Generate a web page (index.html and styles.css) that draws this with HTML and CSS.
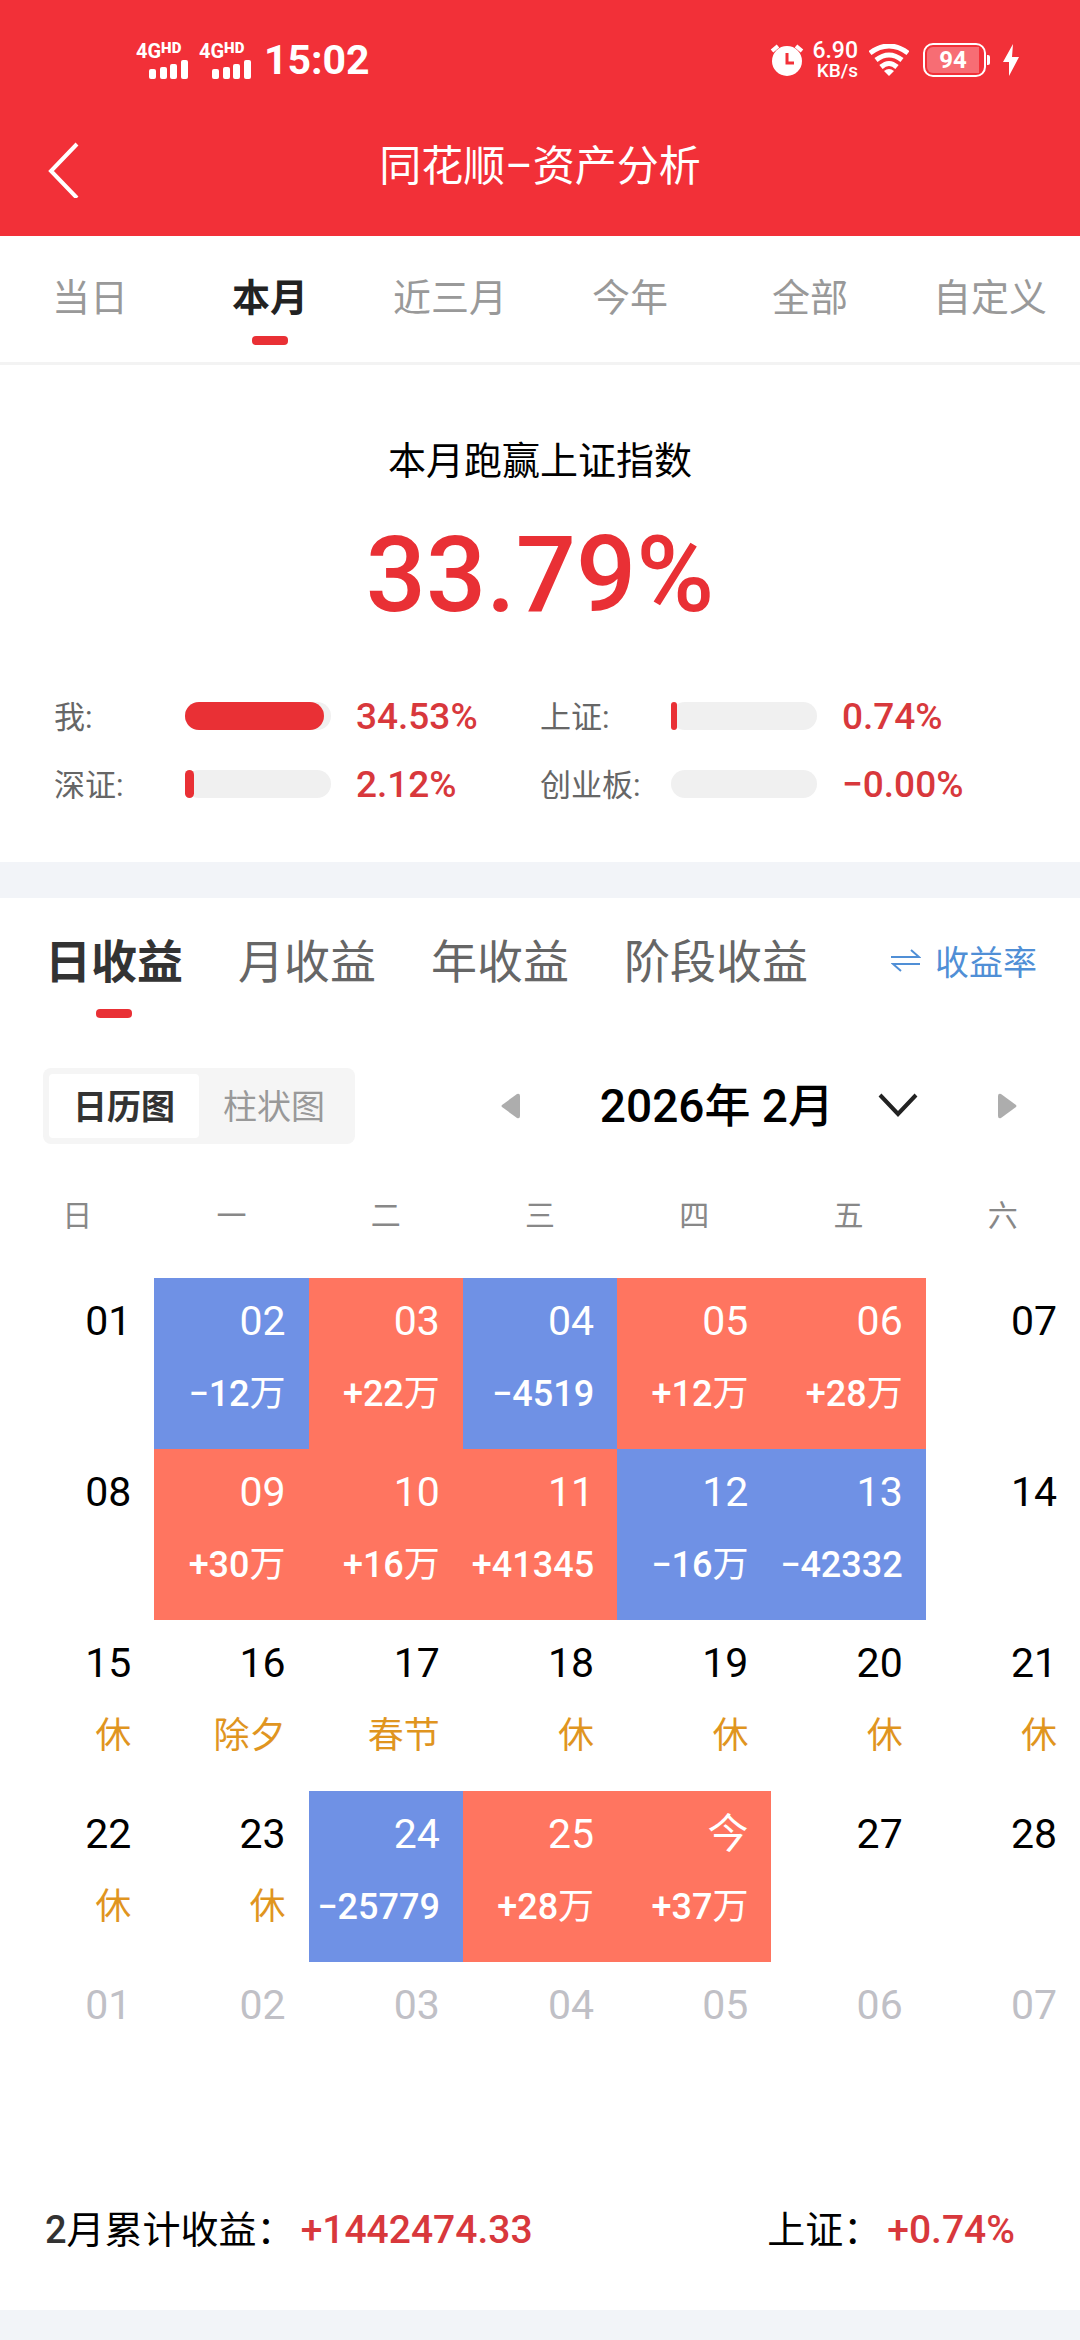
FILE: index.html
```html
<!DOCTYPE html>
<html lang="zh-CN">
<head>
    <meta charset="UTF-8">
    <meta name="viewport" content="width=device-width, initial-scale=1.0">
    <title>同花顺-资产分析</title>
    <link rel="stylesheet" href="styles.css">
</head>
<body>

    <header class="header">
        <!-- Phone status bar -->
        <div class="status-bar">
            <div class="status-left">
                <div class="signal">
                    <span class="network">4G<sup>HD</sup></span>
                    <svg width="40" height="19" viewBox="0 0 40 19" fill="#fff">
                        <rect x="0" y="9" width="7" height="10" rx="2"/>
                        <rect x="11" y="7" width="7" height="12" rx="2"/>
                        <rect x="21" y="4" width="7" height="15" rx="2"/>
                        <rect x="32" y="0" width="7" height="19" rx="2"/>
                    </svg>
                </div>
                <div class="signal">
                    <span class="network">4G<sup>HD</sup></span>
                    <svg width="40" height="19" viewBox="0 0 40 19" fill="#fff">
                        <rect x="0" y="9" width="7" height="10" rx="2"/>
                        <rect x="11" y="7" width="7" height="12" rx="2"/>
                        <rect x="21" y="4" width="7" height="15" rx="2"/>
                        <rect x="32" y="0" width="7" height="19" rx="2"/>
                    </svg>
                </div>
                <span class="time">15:02</span>
            </div>
            <div class="status-right">
                <svg width="34" height="34" viewBox="0 0 34 34">
                    <circle cx="17" cy="18" r="15" fill="#fff"/>
                    <path d="M2 8 L8 3 M32 8 L26 3" stroke="#fff" stroke-width="4"/>
                    <path d="M17 10 V20 H24" fill="none" stroke="#f23038" stroke-width="3"/>
                </svg>
                <div class="speed">
                    <span class="speed-value">6.90</span>
                    <span class="speed-unit">KB/s</span>
                </div>
                <svg class="wifi" width="40" height="32" viewBox="0 0 40 32" fill="none" stroke="#fff" stroke-width="5">
                    <path d="M1 9 Q20 -5 39 9"/>
                    <path d="M7 16 Q20 6 33 16"/>
                    <path d="M12 23 Q20 16 28 23"/>
                    <path d="M20 32 L15 27 Q20 23 25 27 Z" fill="#fff" stroke="none"/>
                </svg>
                <div class="battery"><span>94</span></div>
                <svg width="16" height="32" viewBox="0 0 16 32" fill="#fff">
                    <path d="M10 0 L0 18 H6 L6 32 L16 13 H9 Z"/>
                </svg>
            </div>
        </div>

        <div class="nav">
            <button class="back" aria-label="返回">
                <svg width="32" height="64" viewBox="0 0 32 64" fill="none" stroke="#fff" stroke-width="4">
                    <path d="M29 10 L3 37 L29 64"/>
                </svg>
            </button>
            <h1>同花顺–资产分析</h1>
        </div>
    </header>

    <!-- Period tabs -->
    <nav class="period-tabs">
        <button>当日</button>
        <button class="active">本月</button>
        <button>近三月</button>
        <button>今年</button>
        <button>全部</button>
        <button>自定义</button>
    </nav>

    <section class="summary">
        <h2>本月跑赢上证指数</h2>
        <p class="summary-value">33.79%</p>
        <div class="stats">
            <div class="stat">
                <span class="stat-label">我:</span>
                <span class="bar"><span class="bar-fill" style="width: 95%"></span></span>
                <span class="stat-value">34.53%</span>
            </div>
            <div class="stat">
                <span class="stat-label">上证:</span>
                <span class="bar"><span class="bar-fill" style="width: 4%"></span></span>
                <span class="stat-value">0.74%</span>
            </div>
            <div class="stat">
                <span class="stat-label">深证:</span>
                <span class="bar"><span class="bar-fill" style="width: 6%"></span></span>
                <span class="stat-value">2.12%</span>
            </div>
            <div class="stat">
                <span class="stat-label">创业板:</span>
                <span class="bar"><span class="bar-fill" style="width: 0%"></span></span>
                <span class="stat-value">−0.00%</span>
            </div>
        </div>
    </section>

    <section class="profit">
        <div class="profit-tabs">
            <button class="active">日收益</button>
            <button>月收益</button>
            <button>年收益</button>
            <button>阶段收益</button>
            <a href="#" class="rate-link">
                <svg width="30" height="24" viewBox="0 0 30 24" fill="none" stroke="#508fd6" stroke-width="2">
                    <path d="M0 9 H28 L20 2"/>
                    <path d="M29 16 H2 L10 23"/>
                </svg>
                收益率
            </a>
        </div>

        <div class="toolbar">
            <div class="segment">
                <button class="active">日历图</button>
                <button>柱状图</button>
            </div>
            <div class="month-picker">
                <button aria-label="上个月">
                    <svg width="19" height="26" viewBox="0 0 19 26" fill="#adadad">
                        <path d="M1 12 L16 1 Q19 0 19 3 V23 Q19 26 16 25 L1 14 Q0 13 1 12 Z"/>
                    </svg>
                </button>
                <button class="month">
                    <span>2026年 2月</span>
                    <svg width="40" height="26" viewBox="0 0 40 26" fill="none" stroke="#222" stroke-width="4">
                        <path d="M2 2 L20 21 L38 2"/>
                    </svg>
                </button>
                <button aria-label="下个月">
                    <svg width="19" height="26" viewBox="0 0 19 26" fill="#adadad">
                        <path d="M18 12 L3 1 Q0 0 0 3 V23 Q0 26 3 25 L18 14 Q19 13 18 12 Z"/>
                    </svg>
                </button>
            </div>
        </div>

        <!-- Daily profit calendar -->
        <table class="calendar">
            <thead>
                <tr><th>日</th><th>一</th><th>二</th><th>三</th><th>四</th><th>五</th><th>六</th></tr>
            </thead>
            <tbody>
                <tr>
                    <td><span class="day">01</span></td>
                    <td class="loss"><span class="day">02</span><span class="amount">−12<i>万</i></span></td>
                    <td class="gain"><span class="day">03</span><span class="amount">+22<i>万</i></span></td>
                    <td class="loss"><span class="day">04</span><span class="amount">−4519</span></td>
                    <td class="gain"><span class="day">05</span><span class="amount">+12<i>万</i></span></td>
                    <td class="gain"><span class="day">06</span><span class="amount">+28<i>万</i></span></td>
                    <td><span class="day">07</span></td>
                </tr>
                <tr>
                    <td><span class="day">08</span></td>
                    <td class="gain"><span class="day">09</span><span class="amount">+30<i>万</i></span></td>
                    <td class="gain"><span class="day">10</span><span class="amount">+16<i>万</i></span></td>
                    <td class="gain"><span class="day">11</span><span class="amount">+41345</span></td>
                    <td class="loss"><span class="day">12</span><span class="amount">−16<i>万</i></span></td>
                    <td class="loss"><span class="day">13</span><span class="amount">−42332</span></td>
                    <td><span class="day">14</span></td>
                </tr>
                <tr>
                    <td><span class="day">15</span><span class="rest">休</span></td>
                    <td><span class="day">16</span><span class="rest">除夕</span></td>
                    <td><span class="day">17</span><span class="rest">春节</span></td>
                    <td><span class="day">18</span><span class="rest">休</span></td>
                    <td><span class="day">19</span><span class="rest">休</span></td>
                    <td><span class="day">20</span><span class="rest">休</span></td>
                    <td><span class="day">21</span><span class="rest">休</span></td>
                </tr>
                <tr>
                    <td><span class="day">22</span><span class="rest">休</span></td>
                    <td><span class="day">23</span><span class="rest">休</span></td>
                    <td class="loss"><span class="day">24</span><span class="amount">−25779</span></td>
                    <td class="gain"><span class="day">25</span><span class="amount">+28<i>万</i></span></td>
                    <td class="gain"><span class="day">今</span><span class="amount">+37<i>万</i></span></td>
                    <td><span class="day">27</span></td>
                    <td><span class="day">28</span></td>
                </tr>
                <tr class="next-month">
                    <td><span class="day">01</span></td>
                    <td><span class="day">02</span></td>
                    <td><span class="day">03</span></td>
                    <td><span class="day">04</span></td>
                    <td><span class="day">05</span></td>
                    <td><span class="day">06</span></td>
                    <td><span class="day">07</span></td>
                </tr>
            </tbody>
        </table>

        <div class="totals">
            <p><b>2</b>月累计收益：<strong>+1442474.33</strong></p>
            <p>上证：<strong>+0.74%</strong></p>
        </div>
    </section>

</body>
</html>
```
FILE: styles.css
```css
* {
    box-sizing: border-box;
}

body {
    font-family: Roboto, "Noto Sans CJK SC", sans-serif;
    background-color: #f2f4f8;
    color: #000;
    margin: 0;
}

button {
    font-family: inherit;
    background: none;
    border: none;
    padding: 0;
    cursor: pointer;
}

h1, h2, p {
    margin: 0;
    font-weight: 400;
}

svg {
    display: block;
    flex-shrink: 0;
}

/* Header */
.header {
    background-color: #f23038;
    color: #fff;
}

.status-bar {
    display: flex;
    justify-content: space-between;
    height: 96px;
    padding: 40px 61px 0 136px;
}

.status-left, .status-right {
    display: flex;
    align-items: center;
    height: 40px;
}

.signal {
    display: flex;
    flex-direction: column;
    align-items: flex-end;
    width: 53px;
    margin-right: 10px;
}

.network {
    display: flex;
    align-self: flex-start;
    font-size: 20px;
    font-weight: 700;
    line-height: 18px;
}

.network sup {
    font-size: 15px;
    font-weight: 900;
    line-height: 12px;
}

.time {
    font-size: 41px;
    font-weight: 700;
    line-height: 40px;
    margin-left: 2px;
}

.speed {
    display: flex;
    flex-direction: column;
    align-items: flex-end;
    width: 54px;
    font-weight: 500;
}

.speed-value {
    font-size: 23px;
    line-height: 21px;
}

.speed-unit {
    font-size: 19px;
    line-height: 19px;
}

.wifi {
    margin: 0 14px 0 11px;
}

.battery {
    position: relative;
    width: 63px;
    height: 34px;
    padding: 2px;
    border: 2px solid #fff;
    border-radius: 10px;
    margin-right: 17px;
}

.battery span {
    display: block;
    width: 52px;
    border-radius: 6px 0 0 6px;
    background-color: #f76d74;
    font-size: 24px;
    font-weight: 700;
    line-height: 26px;
    text-align: center;
}

.battery::after {
    content: "";
    position: absolute;
    right: -6px;
    top: 10px;
    width: 3px;
    height: 10px;
    border-radius: 0 2px 2px 0;
    background-color: #fff;
}

.nav {
    display: grid;
    grid-template-columns: 96px 1fr 96px;
    align-items: center;
    height: 140px;
}

.back {
    padding-left: 48px;
}

.nav h1 {
    padding-bottom: 8px;
    font-size: 42px;
    text-align: center;
}

/* Period tabs */
.period-tabs {
    display: grid;
    grid-template-columns: repeat(6, 1fr);
    background-color: #fff;
    border-bottom: 3px solid #f3f3f3;
}

.period-tabs button {
    position: relative;
    height: 126px;
    padding-bottom: 10px;
    font-size: 38px;
    color: #999;
}

.period-tabs .active {
    font-weight: 700;
    color: #222;
}

.period-tabs .active::after,
.profit-tabs .active::after {
    content: "";
    position: absolute;
    left: 50%;
    width: 36px;
    height: 9px;
    margin-left: -18px;
    border-radius: 4px;
    background-color: #e93035;
}

.period-tabs .active::after {
    bottom: 17px;
}

/* Summary */
.summary {
    background-color: #fff;
    padding: 70px 54px 44px;
    margin-bottom: 36px;
}

.summary h2 {
    font-size: 38px;
    line-height: 52px;
    text-align: center;
}

.summary-value {
    font-size: 106px;
    font-weight: 500;
    line-height: 120px;
    text-align: center;
    color: #e93035;
    margin: 28px 0 47px;
}

.stats {
    display: grid;
    grid-template-columns: 1fr 1fr;
}

.stat {
    display: flex;
    align-items: center;
    height: 68px;
}

.stat-label {
    width: 131px;
    padding-bottom: 4px;
    font-size: 31px;
    color: #666;
}

.bar {
    width: 146px;
    height: 28px;
    border-radius: 14px;
    background-color: #f0f0f0;
}

.bar-fill {
    display: block;
    height: 28px;
    border-radius: 14px;
    background-color: #e93035;
}

.stat-value {
    margin-left: 25px;
    font-size: 37px;
    font-weight: 500;
    color: #d8383c;
}

/* Profit */
.profit {
    background-color: #fff;
    padding-bottom: 50px;
}

.profit-tabs {
    display: flex;
    align-items: flex-start;
    gap: 55px;
    padding: 0 43px 0 45px;
}

.profit-tabs button {
    position: relative;
    height: 120px;
    font-size: 46px;
    color: #666;
}

.profit-tabs .active {
    font-weight: 700;
    color: #333;
}

.profit-tabs .active::after {
    bottom: 0;
}

.rate-link {
    display: flex;
    align-items: center;
    gap: 14px;
    height: 120px;
    padding-top: 4px;
    margin-left: auto;
    font-size: 34px;
    color: #508fd6;
    text-decoration: none;
}

.toolbar {
    display: flex;
    justify-content: space-between;
    align-items: center;
    padding: 0 63px 0 43px;
    margin-top: 50px;
}

.segment {
    display: flex;
    padding: 6px;
    border-radius: 8px;
    background-color: #f5f5f5;
}

.segment button {
    width: 150px;
    height: 64px;
    padding-bottom: 4px;
    border-radius: 4px;
    font-size: 34px;
    color: #999;
}

.segment .active {
    background-color: #fff;
    font-weight: 700;
    color: #333;
}

.month-picker {
    display: flex;
    align-items: center;
    gap: 80px;
}

.month {
    display: flex;
    align-items: center;
    gap: 44px;
    font-size: 46px;
    font-weight: 500;
    color: #000;
}

.month span {
    padding-bottom: 8px;
}

/* Calendar */
.calendar {
    width: 100%;
    table-layout: fixed;
    border-collapse: collapse;
}

.calendar th {
    height: 134px;
    padding: 4px 0 0;
    font-size: 30px;
    font-weight: 400;
    color: #888;
}

.calendar td {
    height: 171px;
    padding: 19px 23px 0 0;
    text-align: right;
    vertical-align: top;
    white-space: nowrap;
}

.day {
    display: block;
    font-size: 41px;
    line-height: 48px;
}

.amount, .rest {
    display: block;
    margin-top: 24px;
    font-size: 36px;
    line-height: 50px;
}

.amount {
    font-weight: 500;
}

.amount i {
    font-style: normal;
    font-weight: 400;
}

.rest {
    color: #e0951f;
}

.gain {
    background-color: #ff7560;
    color: #fff;
}

.loss {
    background-color: #6f91e5;
    color: #fff;
}

.next-month {
    color: #c0c0c6;
}

.totals {
    display: flex;
    justify-content: space-between;
    padding: 67px 65px 0 45px;
    font-size: 38px;
    line-height: 60px;
}

.totals b {
    font-weight: 500;
    color: #333;
}

.totals strong {
    margin-left: 6px;
    font-size: 39px;
    font-weight: 500;
    color: #d8383c;
}
```
